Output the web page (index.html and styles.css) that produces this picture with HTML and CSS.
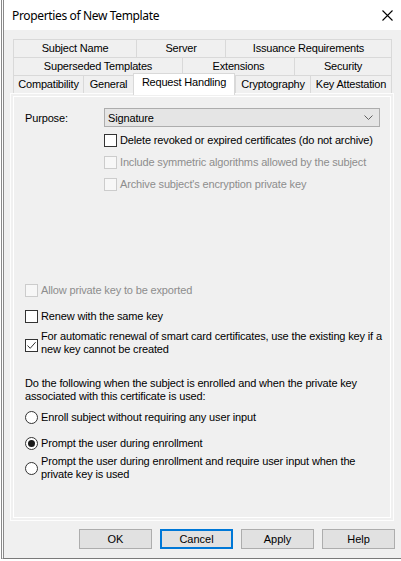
FILE: index.html
```html
<!DOCTYPE html>
<html>
<head>
<meta charset="utf-8">
<title>Properties of New Template</title>
<link rel="stylesheet" href="styles.css">
</head>
<body>
<div class="window">
  <div class="titlebar">
    <span class="title">Properties of New Template</span>
    <svg class="close" width="11" height="11" viewBox="0 0 11 11"><path d="M0.5 0.5 L10.5 10.5 M10.5 0.5 L0.5 10.5" stroke="#000" stroke-width="1.1" fill="none"/></svg>
  </div>
  <div class="client">
    <div class="tabs">
      <div class="tabrow">
        <div class="tab t-subject">Subject Name</div>
        <div class="tab t-server">Server</div>
        <div class="tab t-issuance last">Issuance Requirements</div>
      </div>
      <div class="tabrow">
        <div class="tab t-superseded">Superseded Templates</div>
        <div class="tab t-extensions">Extensions</div>
        <div class="tab t-security last">Security</div>
      </div>
      <div class="tabrow">
        <div class="tab t-compat">Compatibility</div>
        <div class="tab t-general">General</div>
        <div class="tab t-request selected">Request Handling</div>
        <div class="tab t-crypto">Cryptography</div>
        <div class="tab t-key last">Key Attestation</div>
      </div>
    </div>
    <div class="panel">
      <div class="page">
        <div class="purpose-row">
          <span class="label">Purpose:</span>
          <div class="combo">
            <span>Signature</span>
            <svg class="chev" width="9" height="5" viewBox="0 0 9 5"><path d="M0.5 0.5 L4.5 4.5 L8.5 0.5" stroke="#606060" stroke-width="1" fill="none"/></svg>
          </div>
        </div>
        <div class="indent">
          <div class="row"><span class="box"></span><span class="txt">Delete revoked or expired certificates (do not archive)</span></div>
          <div class="row disabled"><span class="box"></span><span class="txt">Include symmetric algorithms allowed by the subject</span></div>
          <div class="row disabled"><span class="box"></span><span class="txt">Archive subject's encryption private key</span></div>
        </div>
        <div class="row disabled r-allow"><span class="box"></span><span class="txt">Allow private key to be exported</span></div>
        <div class="row r-renew"><span class="box"></span><span class="txt">Renew with the same key</span></div>
        <div class="row multi r-auto"><span class="box checked"><svg width="11" height="11" viewBox="0 0 11 11"><path d="M1.5 5.5 L4.2 8.3 L9.6 2.2" stroke="#333" stroke-width="1" fill="none"/></svg></span><span class="txt">For automatic renewal of smart card certificates, use the existing key if a<br>new key cannot be created</span></div>
        <p class="para">Do the following when the subject is enrolled and when the private key<br>associated with this certificate is used:</p>
        <div class="row r-radio1"><span class="radio"></span><span class="txt">Enroll subject without requiring any user input</span></div>
        <div class="row r-radio2"><span class="radio on"></span><span class="txt">Prompt the user during enrollment</span></div>
        <div class="row multi r-radio3"><span class="radio"></span><span class="txt">Prompt the user during enrollment and require user input when the<br>private key is used</span></div>
      </div>
    </div>
    <div class="buttons">
      <div class="btn">OK</div>
      <div class="btn default">Cancel</div>
      <div class="btn">Apply</div>
      <div class="btn">Help</div>
    </div>
  </div>
</div>
</body>
</html>
```
FILE: styles.css
```css
html, body {
  margin: 0;
  padding: 0;
  background: #fff;
}
body {
  width: 401px;
  height: 561px;
  overflow: hidden;
  font-family: "Liberation Sans", Arial, sans-serif;
  font-size: 11px;
  color: #000;
}
.window {
  margin-left: 1px;
  width: 420px;
  height: 559px;
  box-sizing: border-box;
  border-left: 3px double #8a8a8a;
  border-bottom: 1px solid #7a7a7a;
  display: flex;
  flex-direction: column;
}
.titlebar {
  height: 30px;
  background: #fff;
  display: flex;
  align-items: center;
  padding-left: 8px;
  position: relative;
  flex: none;
}
.title {
  font-family: "Noto Sans", "Open Sans", sans-serif;
  font-size: 12px;
  letter-spacing: -0.35px;
  color: #000;
}
.close {
  position: absolute;
  left: 378px;
  top: 10px;
}
.client {
  flex: 1;
  background: #f0f0f0;
  padding-top: 9px;
  display: flex;
  flex-direction: column;
}
.tabs {
  margin-left: 9px;
  display: flex;
  flex-direction: column;
}
.tabrow {
  display: flex;
  height: 19px;
  margin-bottom: -1px;
}
.tab {
  box-sizing: border-box;
  height: 19px;
  border: 1px solid #d9d9d9;
  border-right: none;
  background: #f0f0f0;
  display: flex;
  align-items: center;
  justify-content: center;
  letter-spacing: -0.2px;
  white-space: nowrap;
  padding-bottom: 1px;
}
.tab.last { border-right: 1px solid #d9d9d9; }
.t-subject { width: 123px; }
.t-server { width: 89px; }
.t-issuance { width: 167px; }
.t-superseded { width: 169px; }
.t-extensions { width: 112px; }
.t-security { width: 98px; }
.t-compat { width: 70px; }
.t-general { width: 50px; }
.t-request { width: 102px; }
.t-crypto { width: 75px; }
.t-key { width: 82px; }
.tab.selected {
  position: relative;
  z-index: 1;
  background: #fff;
  margin-top: -2px;
  height: 22px;
  border-right: 1px solid #d9d9d9;
  border-bottom: none;
  align-items: flex-start;
  padding-top: 2px;
}
.panel {
  margin-left: 6px;
  margin-top: 0;
  width: 384px;
  height: 428px;
  box-sizing: border-box;
  border: 1px solid #fdfdfd;
  padding: 2px;
  flex: none;
}
.page {
  height: 100%;
  box-sizing: border-box;
  border: 1px solid #fff;
  padding-left: 11px;
  display: flex;
  flex-direction: column;
  letter-spacing: -0.15px;
}
.purpose-row {
  margin-top: 11px;
  display: flex;
  align-items: center;
  height: 19px;
}
.label {
  width: 79px;
  flex: none;
}
.combo {
  box-sizing: border-box;
  width: 276px;
  height: 19px;
  background: #e5e5e5;
  border: 1px solid #adadad;
  display: flex;
  align-items: center;
  justify-content: space-between;
  padding-left: 3px;
  padding-right: 6px;
}
.indent {
  margin-left: 79px;
  margin-top: 2px;
  display: flex;
  flex-direction: column;
}
.row {
  height: 22px;
  display: flex;
  align-items: center;
  white-space: nowrap;
}
.row.multi {
  height: 26px;
  line-height: 13px;
}
.box, .radio {
  box-sizing: border-box;
  width: 13px;
  height: 13px;
  flex: none;
  border: 1px solid #333;
  background: #fff;
  margin-right: 3px;
  display: flex;
  align-items: center;
  justify-content: center;
}
.radio {
  border-radius: 50%;
}
.radio.on::after {
  content: "";
  width: 7px;
  height: 7px;
  border-radius: 50%;
  background: #1a1a1a;
}
.disabled { color: #8d8d8d; }
.disabled .box {
  border-color: #cccccc;
  background: #f7f7f7;
}
.r-allow { margin-top: 84px; }
.r-renew { margin-top: 4px; }
.r-auto { margin-top: 3px; }
.r-auto .box { margin-top: 4px; }
.para {
  margin: 21px 0 0 0;
  line-height: 13px;
  white-space: nowrap;
}
.r-radio1 { margin-top: 3px; }
.r-radio2 { margin-top: 4px; }
.r-radio3 { margin-top: 1px; }
.buttons {
  margin-top: 8px;
  width: 397px;
  box-sizing: border-box;
  padding-right: 6px;
  display: flex;
  justify-content: flex-end;
  gap: 8px;
}
.btn {
  box-sizing: border-box;
  width: 73px;
  height: 20px;
  background: #e1e1e1;
  border: 1px solid #adadad;
  display: flex;
  align-items: center;
  justify-content: center;
}
.btn.default {
  border: 2px solid #0078d7;
}
```
